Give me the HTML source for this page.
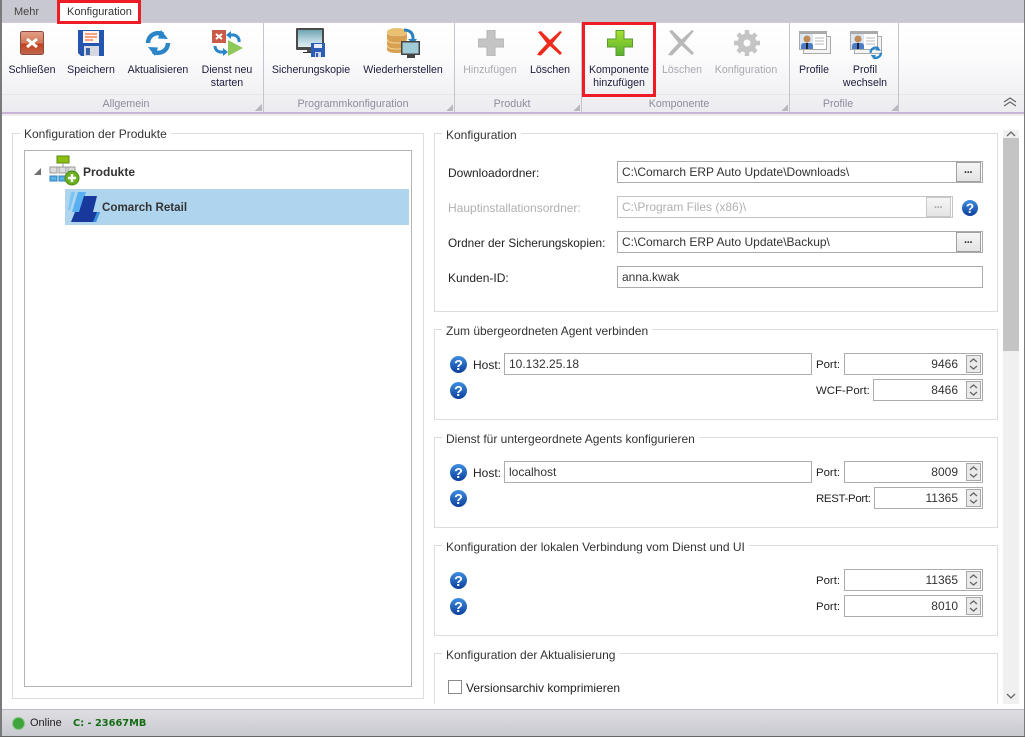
<!DOCTYPE html>
<html><head><meta charset="utf-8"><style>
html,body{margin:0;padding:0;background:#fff}
#w{position:relative;width:1025px;height:737px;overflow:hidden;background:#fff;font:12px "Liberation Sans",sans-serif;color:#222}
#w div,#w svg,#w span.t{position:absolute}
.t{white-space:nowrap;line-height:14px}
.c{transform:translateX(-50%);text-align:center;color:#1c1c3c;font-size:10.600px}
.d{color:#a8a8b0}
.g{color:#8c8c9c;transform:translateX(-50%);white-space:nowrap;line-height:14px;font-size:10.700px}
.f{border:1px solid #dcdcdc;box-sizing:border-box}
.l{background:#fff;padding:0 4px;white-space:nowrap;line-height:14px;color:#333}
.i{border:1px solid #ababab;box-sizing:border-box;background:#fff;line-height:21px;padding-left:4px;white-space:nowrap;color:#333}
.r{text-align:right;padding-right:24px;padding-left:0}
.b{background:linear-gradient(#f6f6f6,#e4e4e4);border:1px solid #a0a0a0;box-sizing:border-box;text-align:center;font-weight:bold;line-height:19px;letter-spacing:.5px;color:#333;font-size:6.500px}
.p{font-size:11.400px}
.v{width:1px;background:#c4c4cc;top:23px;height:89px}
.cr{width:7px;height:7px;background:linear-gradient(135deg,transparent 50%,#b8b8c0 50%);top:104px}
</style></head><body><div id="w">
<svg width="0" height="0"><defs>
<linearGradient id="hb" x1="0" y1="0" x2="0" y2="1"><stop offset="0" stop-color="#3f8fe0"/><stop offset="1" stop-color="#0c3f9c"/></linearGradient>
<g id="help"><circle cx="8" cy="8" r="8" fill="url(#hb)"/><text x="8" y="13" text-anchor="middle" font-family="Liberation Sans" font-weight="bold" font-size="13.500" fill="#fff">?</text></g>
<g id="spin"><rect x=".5" y=".5" width="14" height="17" fill="#eaeaea" stroke="#a8a8a8"/><path d="M4 7l3.500-3 3.500 3M4 11l3.500 3 3.500-3" fill="none" stroke="#666" stroke-width="1.300"/></g>
<g id="prof"><rect x="4.500" y="5.500" width="27" height="17" fill="#f4f4f4" stroke="#aaa"/><rect x=".5" y=".5" width="27" height="18" fill="#fff" stroke="#aaa"/><rect x="0" y="0" width="28" height="3" fill="#aaa"/><rect x="1" y="3" width="13" height="15" fill="#dce6f2"/><circle cx="8" cy="8" r="3.500" fill="#c08a58"/><path d="M2 18v-3q0-3 3-3h6q3 0 3 3v3z" fill="#4a7cc8"/><path d="M7 12h2v6H7z" fill="#223"/><path d="M16 7h9M16 10h9M16 13h9" stroke="#bbb"/></g>
<g id="arrows"><path d="M3 13A10 10 0 0 1 18 4.500" fill="none" stroke="#2a86c8" stroke-width="4.500"/><path d="M16 0l7 9-10-.5z" fill="#2a86c8"/><path d="M23 13A10 10 0 0 1 8 21.500" fill="none" stroke="#2a86c8" stroke-width="4.500"/><path d="M10 26L3 17l10 .5z" fill="#2a86c8"/></g>
</defs></svg>

<!-- window / tab bar -->
<div style="left:0;top:0;width:1025px;height:23px;background:#c8c8d0"></div>
<div style="left:57px;top:0;width:84px;height:24px;background:#fff;border:3px solid #ee1c25;box-sizing:border-box;z-index:3"></div>
<span class="t" style="left:14px;top:5px;color:#444;font-size:11px">Mehr</span>
<span class="t" style="left:67px;top:5px;color:#333;z-index:4;font-size:11px">Konfiguration</span>

<!-- ribbon -->
<div style="left:1px;top:22px;width:1023px;height:90px;background:linear-gradient(#fff,#fbfbfc 40%,#ececf0);border-top:1px solid #d6c8e0;box-sizing:border-box"></div>
<div style="left:1px;top:94px;width:1023px;height:1px;background:#e6e6ea"></div>
<div style="left:1px;top:112px;width:1023px;height:2px;background:#c9b3d9"></div>
<div style="left:1px;top:114px;width:1023px;height:2px;background:#eee"></div>
<div class="v" style="left:263px"></div><div class="v" style="left:454px"></div><div class="v" style="left:581px"></div><div class="v" style="left:789px"></div><div class="v" style="left:898px"></div>
<div class="cr" style="left:255px"></div><div class="cr" style="left:446px"></div><div class="cr" style="left:573px"></div><div class="cr" style="left:781px"></div><div class="cr" style="left:891px"></div>

<div style="left:582px;top:22px;width:74px;height:75px;border:3px solid #ee1c25;box-sizing:border-box;z-index:3"></div>

<!-- ribbon icons -->
<svg style="left:20px;top:31px" width="24" height="24" viewBox="0 0 24 24"><defs><linearGradient id="rd" x1="0" y1="0" x2="0" y2="1"><stop offset="0" stop-color="#e4a08a"/><stop offset=".5" stop-color="#d07658"/><stop offset=".55" stop-color="#c4401c"/><stop offset="1" stop-color="#c06a50"/></linearGradient></defs><rect x=".5" y=".5" width="23" height="23" rx="2" fill="url(#rd)" stroke="#8a4a3c"/><path d="M7 8l10 8M17 8L7 16" stroke="#fff" stroke-width="3"/></svg>
<svg style="left:78px;top:30px" width="26" height="26" viewBox="0 0 26 26"><path d="M0 0h26v26H3l-3-3z" fill="#2456b0"/><rect x="5" y="1" width="16" height="12" fill="#fdf4ee"/><path d="M7 4h12M7 7h12M7 10h8" stroke="#f07040" stroke-width="1.200"/><rect x="6" y="16" width="15" height="10" fill="#d8d8e0"/><rect x="8" y="18" width="4" height="7" fill="#3a60a8"/></svg>
<svg style="left:145px;top:29px" width="26" height="28" viewBox="0 0 26 26"><use href="#arrows"/></svg>
<svg style="left:212px;top:30px" width="31" height="26" viewBox="0 0 31 26"><rect width="14" height="13" fill="#c85c48"/><path d="M4 4l6 5M10 4L4 9" stroke="#fff" stroke-width="2"/><path d="M27 12a6 6 0 0 0-6-7h-4" fill="none" stroke="#2a86c8" stroke-width="3"/><path d="M19 1l-5 4 5 4z" fill="#2a86c8"/><path d="M3 16a6 6 0 0 0 5 6h5" fill="none" stroke="#2a86c8" stroke-width="3"/><path d="M11 18l5 4-5 4z" fill="#2a86c8"/><path d="M16 10l15 8-15 8z" fill="#8ec85a"/></svg>
<svg style="left:296px;top:28px" width="30" height="30" viewBox="0 0 30 30"><defs><linearGradient id="sc" x1="0" y1="0" x2="0" y2="1"><stop offset="0" stop-color="#6fa4b2"/><stop offset=".6" stop-color="#b8d6de"/><stop offset="1" stop-color="#e0eef2"/></linearGradient></defs><rect x="0" y="0" width="28" height="22" rx="1" fill="#4a4a4a"/><rect x="2" y="2" width="24" height="17" fill="url(#sc)"/><path d="M7 24h14v1H7z" fill="#333"/><rect x="11" y="22" width="6" height="2" fill="#555"/><rect x="15" y="15" width="14" height="14" fill="#2c5eb8"/><rect x="18" y="16" width="8" height="4" fill="#e8eef8"/><rect x="19" y="24" width="6" height="5" fill="#cfd6e6"/><rect x="20" y="25" width="2" height="4" fill="#2c5eb8"/></svg>
<svg style="left:387px;top:28px" width="33" height="31" viewBox="0 0 33 31"><ellipse cx="10" cy="4" rx="10" ry="4" fill="#e8c070"/><path d="M0 4v17q0 4 10 4t10-4V4q0 4-10 4T0 4z" fill="#d8a050"/><path d="M0 11q0 4 10 4t10-4M0 17q0 4 10 4t10-4" fill="none" stroke="#f2d898"/><path d="M17 2q10 0 9 11" fill="none" stroke="#2a80c0" stroke-width="3"/><path d="M21 11h9l-4 5z" fill="#2a80c0"/><rect x="14" y="13" width="19" height="14" fill="#444"/><rect x="15.500" y="14.500" width="16" height="11" fill="#a0ccd8"/><rect x="20" y="27" width="8" height="3" fill="#444"/></svg>
<svg style="left:478px;top:30px" width="26" height="26" viewBox="0 0 26 26"><path d="M9 0h8v9h9v8h-9v9H9v-9H0V9h9z" fill="#c4c4c4" stroke="#b4b4b4"/></svg>
<svg style="left:537px;top:31px" width="26" height="25" viewBox="0 0 26 25"><path d="M1 1l3-1 9 9 10-9 2 1-9.500 11.500L25 22l-2 2-10-9-9 9.500L0 24l2-3 8-8.500z" fill="#ee2a1c"/></svg>
<svg style="left:607px;top:30px" width="26" height="26" viewBox="0 0 26 26"><defs><linearGradient id="gp" x1="0" y1="0" x2="0" y2="1"><stop offset="0" stop-color="#a8e030"/><stop offset="1" stop-color="#58b030"/></linearGradient></defs><path d="M9 .5h8v8.500h8.500v8H17v8.500H9V17H.5V9H9z" fill="url(#gp)" stroke="#5a9a30"/></svg>
<svg style="left:668px;top:30px" width="27" height="26" viewBox="0 0 27 26"><path d="M1 1l3-1 9.500 9.500L24 0l2 1-10 12 10 10-2 2-10.500-9.500L4 25.500 0 25l2-3 8.500-9z" fill="#b8b8b8"/></svg>
<svg style="left:734px;top:30px" width="26" height="26" viewBox="0 0 26 26"><circle cx="13" cy="13" r="6.500" fill="none" stroke="#c4c4c4" stroke-width="6"/><path d="M13 0v26M0 13h26M4 4l18 18M22 4L4 22" stroke="#c4c4c4" stroke-width="4.500" stroke-dasharray="5 16"/></svg>
<svg style="left:799px;top:31px" width="32" height="23" viewBox="0 0 32 23"><use href="#prof"/></svg>
<svg style="left:850px;top:31px" width="33" height="29" viewBox="0 0 33 29"><use href="#prof"/><g transform="translate(19,15) scale(.52)"><use href="#arrows"/></g></svg>

<!-- ribbon labels -->
<span class="t c" style="left:32px;top:63px">Schließen</span>
<span class="t c" style="left:91px;top:63px">Speichern</span>
<span class="t c" style="left:158px;top:63px">Aktualisieren</span>
<span class="t c" style="left:227px;top:64px;line-height:13px">Dienst neu<br>starten</span>
<span class="t c" style="left:311px;top:63px">Sicherungskopie</span>
<span class="t c" style="left:403px;top:63px">Wiederherstellen</span>
<span class="t c d" style="left:490px;top:63px">Hinzufügen</span>
<span class="t c" style="left:550px;top:63px">Löschen</span>
<span class="t c" style="left:619px;top:64px;line-height:13px">Komponente<br>hinzufügen</span>
<span class="t c d" style="left:682px;top:63px">Löschen</span>
<span class="t c d" style="left:746px;top:63px">Konfiguration</span>
<span class="t c" style="left:814px;top:63px">Profile</span>
<span class="t c" style="left:865px;top:64px;line-height:13px">Profil<br>wechseln</span>
<span class="g" style="position:absolute;left:126px;top:97px">Allgemein</span>
<span class="g" style="position:absolute;left:353px;top:97px">Programmkonfiguration</span>
<span class="g" style="position:absolute;left:512px;top:97px">Produkt</span>
<span class="g" style="position:absolute;left:679px;top:97px">Komponente</span>
<span class="g" style="position:absolute;left:838px;top:97px">Profile</span>
<svg style="left:1003px;top:97px" width="14" height="10" viewBox="0 0 14 10"><path d="M1 5l6-4 6 4M1 9l6-4 6 4" fill="none" stroke="#666" stroke-width="1.200"/></svg>

<!-- left panel -->
<div class="f" style="left:12px;top:133px;width:412px;height:566px"></div>
<div class="l" style="left:20px;top:127px">Konfiguration der Produkte</div>
<div style="left:24px;top:150px;width:388px;height:537px;border:1px solid #b4b4b4;box-sizing:border-box"></div>
<svg style="left:34px;top:168px" width="7" height="7"><path d="M7 0v7H0z" fill="#707070"/></svg>
<svg style="left:49px;top:154px" width="32" height="32" viewBox="0 0 32 32"><rect x="8" y="2" width="12" height="7" fill="#8cc010" stroke="#5a8a10"/><path d="M14 9v4M5 13h18" stroke="#999"/><g fill="#ddd" stroke="#999"><rect x="1" y="13" width="7" height="6"/><rect x="10" y="13" width="7" height="6"/><rect x="19" y="13" width="7" height="6"/></g><g fill="#5ab0e0" stroke="#2a80c0"><rect x="1" y="22" width="7" height="5"/><rect x="10" y="22" width="7" height="5"/></g><circle cx="23" cy="24" r="7" fill="#6ab020" stroke="#4a8a18"/><path d="M23 20v8M19 24h8" stroke="#fff" stroke-width="2.500"/></svg>
<span class="t" style="left:83px;top:165px;font-weight:bold;color:#333;font-size:12px">Produkte</span>
<div style="left:65px;top:189px;width:344px;height:36px;background:#afd4ee"></div>
<svg style="left:67px;top:190px" width="34" height="34" viewBox="0 0 34 34"><path d="M4 2h4L3 20H1z" fill="#7cc4f4"/><path d="M11 2h8l-7 20H5z" fill="#58b0f0"/><path d="M17 6h13l-4 16h7l-4 10H4l4-10h4z" fill="#18389c"/><path d="M26 32h3l4-10h-3z" fill="#3a90e0"/></svg>
<span class="t" style="left:102px;top:201px;font-weight:bold;color:#333;font-size:11.600px">Comarch Retail</span>

<!-- right panels -->
<div class="f" style="left:434px;top:133px;width:564px;height:179px"></div>
<div class="l" style="left:442px;top:128px">Konfiguration</div>
<span class="t" style="left:448px;top:166px">Downloadordner:</span>
<div class="i" style="left:617px;top:161px;width:366px;height:22px">C:\Comarch ERP Auto Update\Downloads\</div>
<div class="b" style="left:956px;top:162px;width:25px;height:20px">•••</div>
<span class="t" style="left:448px;top:201px;color:#b0b0b0">Hauptinstallationsordner:</span>
<div class="i" style="left:617px;top:196px;width:336px;height:22px;color:#b0b0b0;border-color:#c4c4c4">C:\Program Files (x86)\</div>
<div class="b" style="left:926px;top:197px;width:25px;height:20px;color:#aaa;border-color:#c8c8c8">•••</div>
<svg style="left:962px;top:200px" width="16" height="16"><use href="#help"/></svg>
<span class="t" style="left:448px;top:236px;font-size:11.800px">Ordner der Sicherungskopien:</span>
<div class="i" style="left:617px;top:231px;width:366px;height:22px">C:\Comarch ERP Auto Update\Backup\</div>
<div class="b" style="left:956px;top:232px;width:25px;height:20px">•••</div>
<span class="t" style="left:448px;top:271px">Kunden-ID:</span>
<div class="i" style="left:617px;top:266px;width:366px;height:22px">anna.kwak</div>

<div class="f" style="left:434px;top:329px;width:564px;height:91px"></div>
<div class="l" style="left:442px;top:324px">Zum übergeordneten Agent verbinden</div>
<svg style="left:450px;top:356px" width="17" height="17" viewBox="0 0 16 16"><use href="#help"/></svg>
<svg style="left:450px;top:382px" width="17" height="17" viewBox="0 0 16 16"><use href="#help"/></svg>
<span class="t" style="left:473px;top:358px">Host:</span>
<div class="i" style="left:504px;top:353px;width:308px;height:22px">10.132.25.18</div>
<span class="t p" style="left:816px;top:358px">Port:</span>
<div class="i r" style="left:844px;top:353px;width:139px;height:22px">9466</div>
<svg style="left:966px;top:355px" width="15" height="18"><use href="#spin"/></svg>
<span class="t p" style="left:816px;top:384px">WCF-Port:</span>
<div class="i r" style="left:873px;top:379px;width:110px;height:22px">8466</div>
<svg style="left:966px;top:381px" width="15" height="18"><use href="#spin"/></svg>

<div class="f" style="left:434px;top:437px;width:564px;height:91px"></div>
<div class="l" style="left:442px;top:432px">Dienst für untergeordnete Agents konfigurieren</div>
<svg style="left:450px;top:464px" width="17" height="17" viewBox="0 0 16 16"><use href="#help"/></svg>
<svg style="left:450px;top:490px" width="17" height="17" viewBox="0 0 16 16"><use href="#help"/></svg>
<span class="t" style="left:473px;top:466px">Host:</span>
<div class="i" style="left:504px;top:461px;width:308px;height:22px">localhost</div>
<span class="t p" style="left:816px;top:466px">Port:</span>
<div class="i r" style="left:844px;top:461px;width:139px;height:22px">8009</div>
<svg style="left:966px;top:463px" width="15" height="18"><use href="#spin"/></svg>
<span class="t p" style="left:816px;top:492px;letter-spacing:-.3px">REST-Port:</span>
<div class="i r" style="left:874px;top:487px;width:109px;height:22px">11365</div>
<svg style="left:966px;top:489px" width="15" height="18"><use href="#spin"/></svg>

<div class="f" style="left:434px;top:545px;width:564px;height:91px"></div>
<div class="l" style="left:442px;top:540px">Konfiguration der lokalen Verbindung vom Dienst und UI</div>
<svg style="left:450px;top:572px" width="17" height="17" viewBox="0 0 16 16"><use href="#help"/></svg>
<svg style="left:450px;top:598px" width="17" height="17" viewBox="0 0 16 16"><use href="#help"/></svg>
<span class="t p" style="left:816px;top:574px">Port:</span>
<div class="i r" style="left:844px;top:569px;width:139px;height:22px">11365</div>
<svg style="left:966px;top:571px" width="15" height="18"><use href="#spin"/></svg>
<span class="t p" style="left:816px;top:600px">Port:</span>
<div class="i r" style="left:844px;top:595px;width:139px;height:22px">8010</div>
<svg style="left:966px;top:597px" width="15" height="18"><use href="#spin"/></svg>

<div class="f" style="left:434px;top:653px;width:564px;height:90px"></div>
<div class="l" style="left:442px;top:648px">Konfiguration der Aktualisierung</div>
<div style="left:448px;top:680px;width:14px;height:14px;border:1px solid #8a8a8a;box-sizing:border-box;background:#fff"></div>
<span class="t" style="left:466px;top:681px">Versionsarchiv komprimieren</span>

<!-- scrollbar -->
<div style="left:1003px;top:130px;width:16px;height:574px;background:#f0f0f0"></div>
<div style="left:1003px;top:138px;width:16px;height:213px;background:#c4c4c4"></div>
<svg style="left:1006px;top:130px" width="10" height="8"><path d="M1 6l4-4 4 4" fill="none" stroke="#666" stroke-width="1.300"/></svg>
<svg style="left:1006px;top:692px" width="10" height="8"><path d="M1 2l4 4 4-4" fill="none" stroke="#666" stroke-width="1.300"/></svg>

<!-- status bar -->
<div style="left:0;top:704px;width:1025px;height:5px;background:#fff"></div>
<div style="left:0;top:709px;width:1025px;height:28px;background:linear-gradient(#dedee2,#c8c8d0);border-top:1px solid #bcbcc4;box-sizing:border-box"></div>
<svg style="left:12px;top:717px" width="13" height="13"><circle cx="6.500" cy="6.500" r="6" fill="#3fa43c" stroke="#8ac888"/></svg>
<span class="t" style="left:30px;top:716px;color:#222;font-size:11px">Online</span>
<span class="t" style="left:73px;top:717px;color:#146c14;font-weight:bold;font-family:'DejaVu Sans',sans-serif;font-size:9.800px">C: - 23667MB</span>

<!-- window frame -->
<div style="left:0;top:0;width:2px;height:737px;background:#7a7a7a;z-index:5"></div>
<div style="left:1024px;top:0;width:1px;height:737px;background:#7a7a7a;z-index:5"></div>
<div style="left:0;top:736px;width:1025px;height:1px;background:#666;z-index:5"></div>
</div></body></html>
